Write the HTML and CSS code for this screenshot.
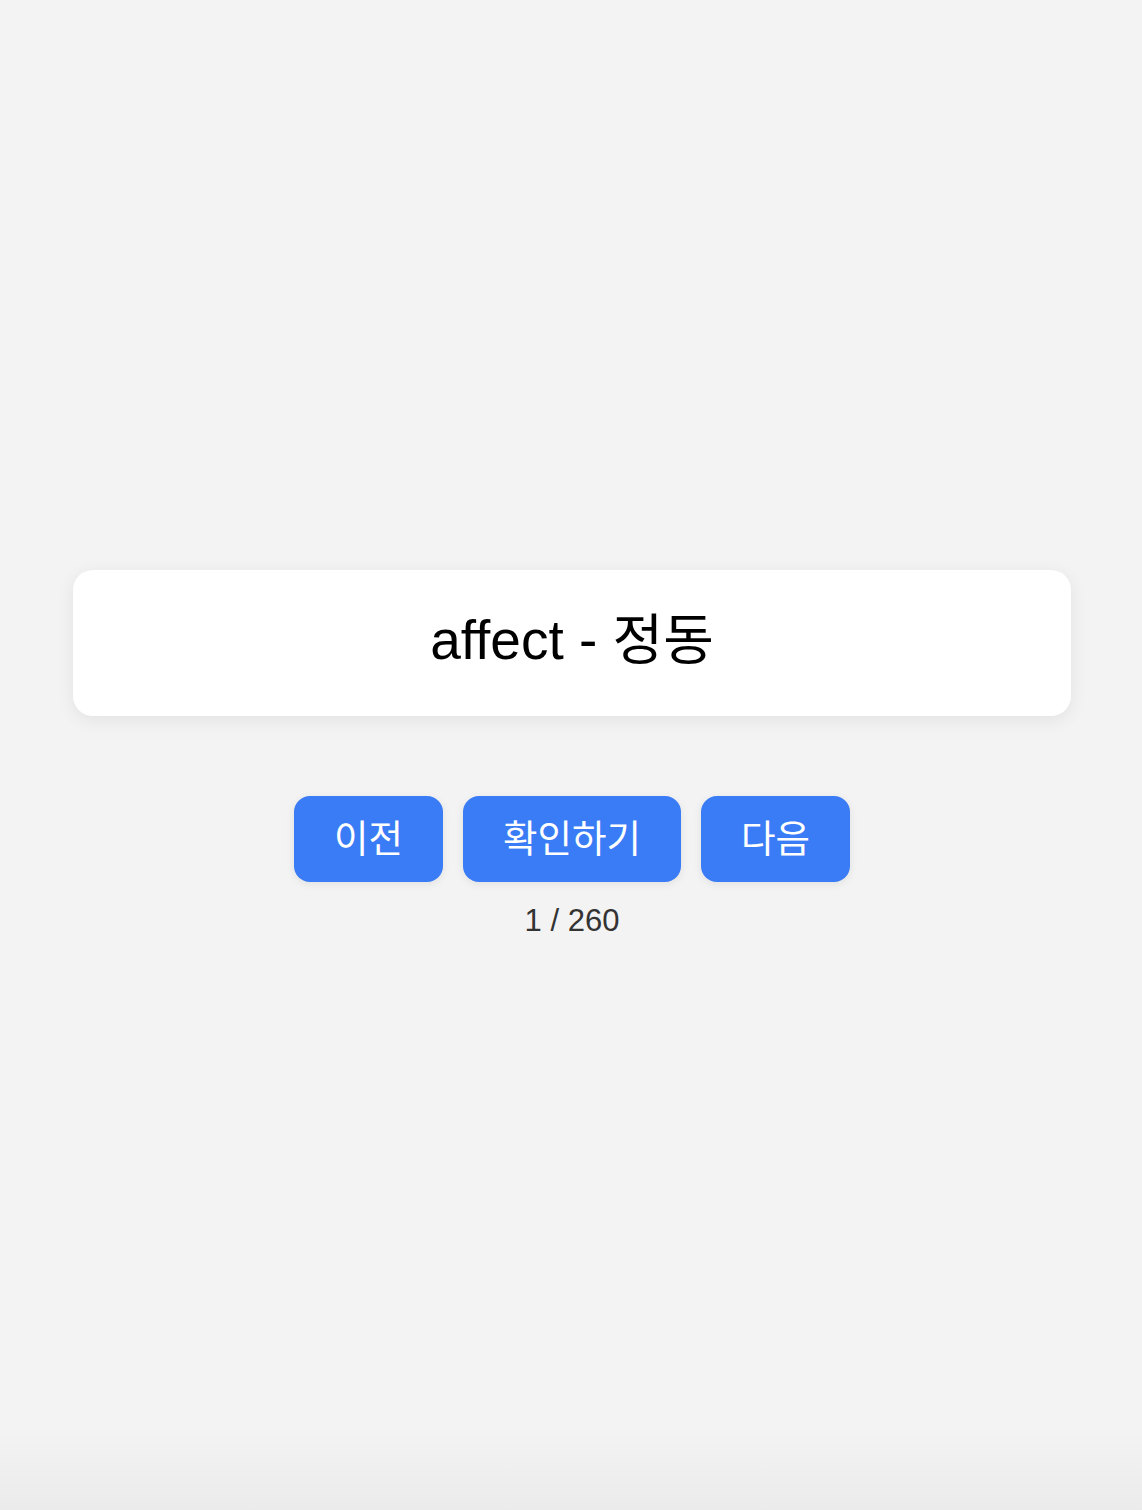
FILE: index.html
```html
<!DOCTYPE html>
<html lang="ko">
<head>
<meta charset="utf-8">
<title>단어 카드</title>
<link rel="stylesheet" href="styles.css">
</head>
<body>
<main class="app">
  <section class="card">
    <p class="word">affect - 정동</p>
  </section>
  <div class="controls">
    <button class="btn" type="button">이전</button>
    <button class="btn" type="button">확인하기</button>
    <button class="btn" type="button">다음</button>
  </div>
  <p class="counter">1 / 260</p>
</main>
</body>
</html>
```

FILE: styles.css
```css
html {
  height: 100%;
  background: linear-gradient(to bottom, #f3f3f3 0, #f3f3f3 calc(100% - 80px), #ebebeb 100%);
}

body {
  margin: 0;
  min-height: 100vh;
  font-family: "Liberation Sans", Arial, "Noto Sans CJK KR", sans-serif;
  color: #000;
}

.app {
  min-height: 100vh;
  box-sizing: border-box;
  padding: 0 71px 0 73px;
  display: flex;
  flex-direction: column;
  align-items: center;
  justify-content: center;
}

.card {
  width: 100%;
  box-sizing: border-box;
  height: 146px;
  background: #fff;
  border-radius: 20px;
  box-shadow: 0 4px 18px rgba(0, 0, 0, 0.07);
  display: flex;
  align-items: center;
  justify-content: center;
}

.word {
  margin: 0;
  font-size: 55px;
  line-height: 64px;
  color: #000;
  position: relative;
  top: -3px;
}

.controls {
  margin-top: 80px;
  display: flex;
  gap: 20px;
}

.btn {
  height: 86px;
  padding: 0 40px;
  border: none;
  border-radius: 16px;
  background: #3a7cf6;
  color: #fff;
  font-family: "Liberation Sans", Arial, "Noto Sans CJK KR", sans-serif;
  font-size: 37.5px;
  line-height: 46px;
  box-shadow: 0 2px 8px rgba(0, 0, 0, 0.08);
  cursor: pointer;
}

.counter {
  margin: 20px 0 0;
  font-size: 31px;
  line-height: 38px;
  color: #333;
}
```
